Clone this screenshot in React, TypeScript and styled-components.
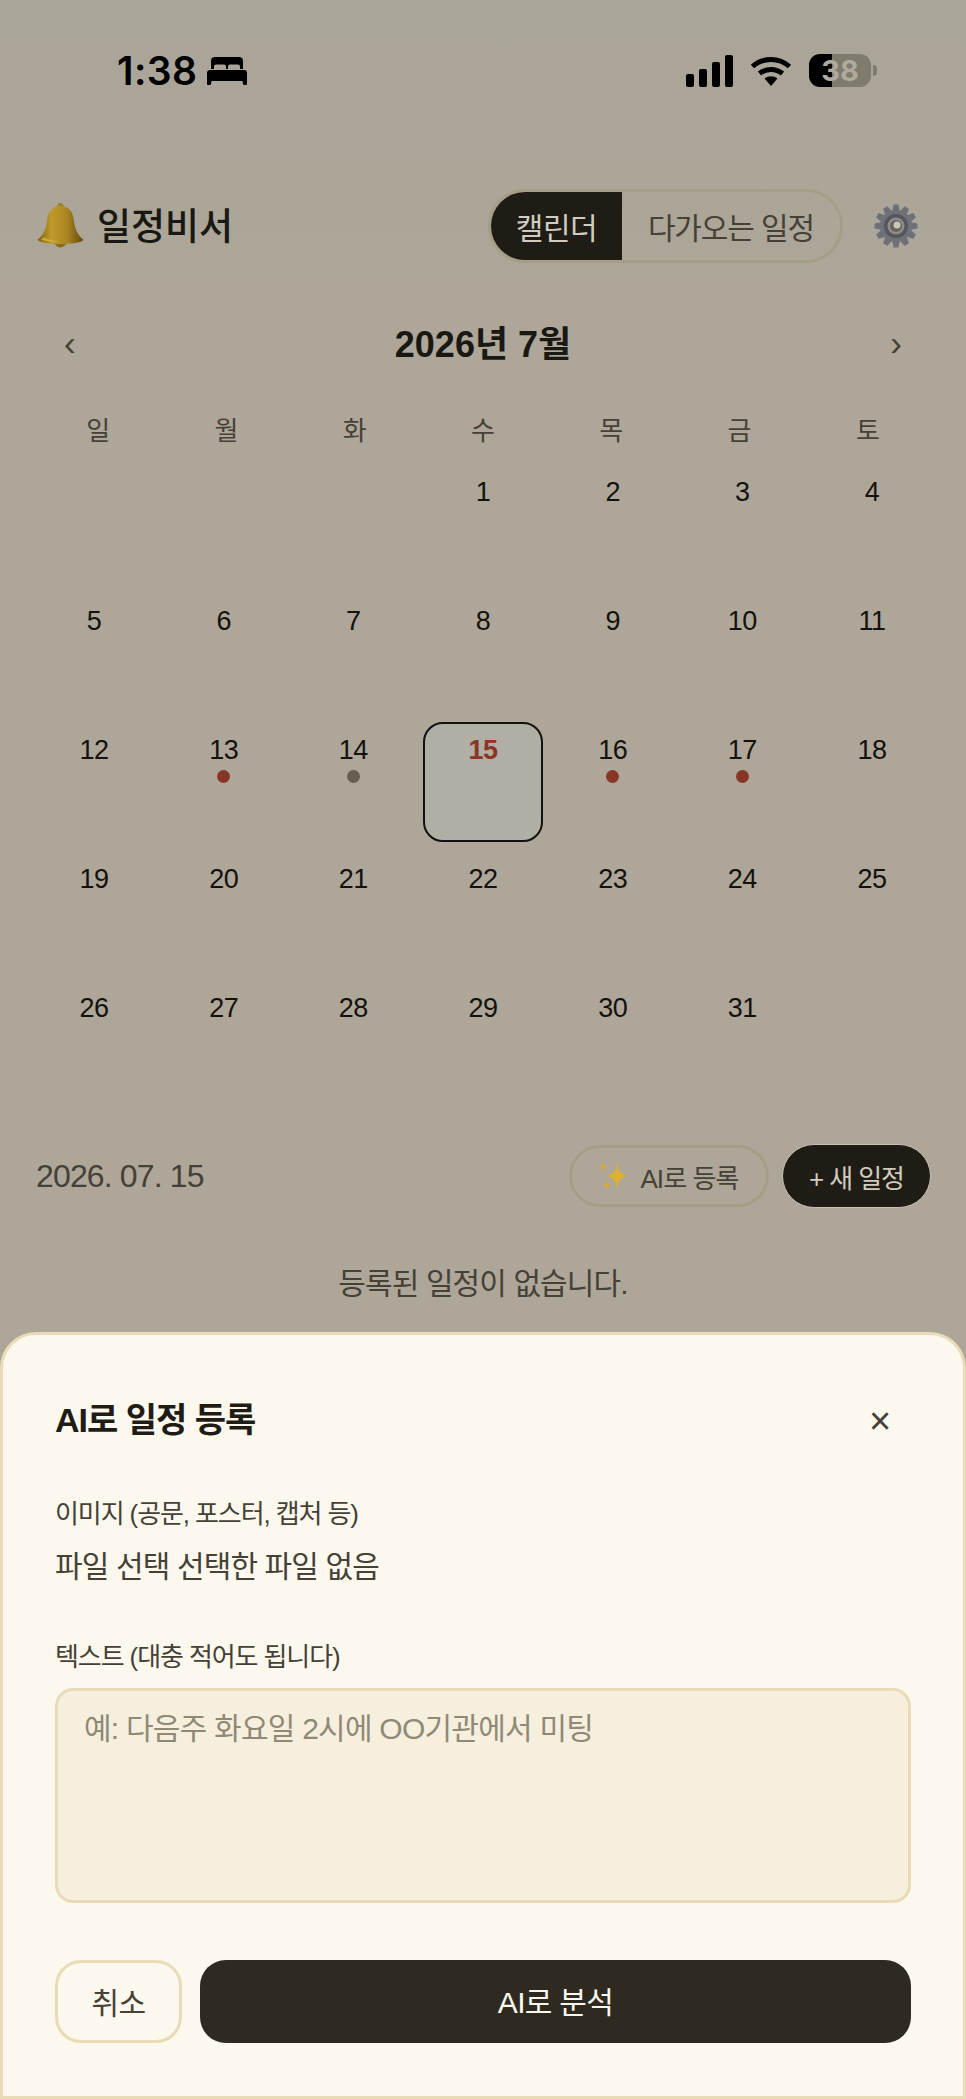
import styled, { createGlobalStyle } from 'styled-components'

const GlobalStyle = createGlobalStyle`
  * {
    box-sizing: border-box;
  }

  html,
  body {
    margin: 0;
    padding: 0;
  }

  body {
    font-family: 'Liberation Sans', 'Noto Sans CJK KR', sans-serif;
    background: #ada699;
  }
`

const Page = styled.div`
  position: relative;
  width: 966px;
  height: 2099px;
  overflow: hidden;
  background: linear-gradient(#a9a598 0, #ada699 300px);
  color: #1a1812;
`

const StatusBar = styled.div`
  display: flex;
  justify-content: space-between;
  height: 87px;
  padding: 54px 89px 0 117px;
`

const StatusGroup = styled.div`
  display: flex;
  align-items: center;
  height: 33px;
`

const Time = styled.span`
  font-family: Inter, sans-serif;
  font-size: 39px;
  font-weight: 600;
  letter-spacing: 0.4px;
  color: #000;
  margin-right: 10px;
`

const Battery = styled.div`
  display: flex;
  justify-content: center;
  align-items: center;
  width: 62px;
  height: 33px;
  margin-left: 17px;
  border-radius: 11px;
  background: linear-gradient(90deg, #000 37.5%, #7f7b6f 37.5%);
  color: #aeaa9d;
  font-family: Inter, sans-serif;
  font-size: 29px;
  font-weight: 700;
`

const BatteryCap = styled.div`
  width: 4px;
  height: 11px;
  margin-left: 2px;
  border-radius: 0 4px 4px 0;
  background: #7f7b6f;
`

const Header = styled.header`
  display: flex;
  align-items: center;
  height: 74px;
  margin-top: 102px;
  padding: 0 48px 0 37px;
`

const Brand = styled.h1`
  display: flex;
  align-items: center;
  gap: 13px;
  flex: 1;
  margin: 0;
  font-size: 37px;
  font-weight: 500;
`

const BrandName = styled.span`
  margin-bottom: 4px;
`

const Segment = styled.div`
  display: flex;
  width: 355px;
  height: 74px;
  border: 3px solid #a59e86;
  border-radius: 37px;
  overflow: hidden;
  margin-right: 31px;
`

const SegmentItem = styled.div<{ $active?: boolean }>`
  display: flex;
  justify-content: center;
  align-items: center;
  width: ${(p) => (p.$active ? '131px' : 'auto')};
  flex: ${(p) => (p.$active ? 'none' : 1)};
  background: ${(p) => (p.$active ? '#1f1c15' : 'transparent')};
  color: ${(p) => (p.$active ? '#cfcbbf' : '#454136')};
  font-size: 30px;
  letter-spacing: ${(p) => (p.$active ? '-0.5px' : '-1.1px')};
`

const MonthRow = styled.div`
  display: flex;
  justify-content: space-between;
  align-items: center;
  height: 60px;
  margin-top: 50px;
  padding: 0 64px;
`

const MonthArrow = styled.span`
  font-size: 35px;
  color: #454136;
`

const MonthTitle = styled.h2`
  margin: 0 0 4px;
  font-size: 36px;
  font-weight: 700;
`

const Weekdays = styled.div`
  display: grid;
  grid-template-columns: repeat(7, 1fr);
  height: 40px;
  margin-top: 35px;
  padding: 0 34px;
  align-items: center;
  text-align: center;
  color: #454136;
  font-size: 26px;
`

const Dates = styled.div`
  display: grid;
  grid-template-columns: repeat(7, 1fr);
  grid-auto-rows: 120px;
  column-gap: 9.6px;
  row-gap: 9px;
  margin-top: 16px;
  padding: 0 34px;
`

const Cell = styled.div<{ $selected?: boolean }>`
  display: flex;
  flex-direction: column;
  align-items: center;
  padding-top: 6.500px;
  border: 2.500px solid ${(p) => (p.$selected ? '#111' : 'transparent')};
  border-radius: 20px;
  background: ${(p) => (p.$selected ? '#b1aea4' : 'transparent')};
`

const DateNumber = styled.span<{ $selected?: boolean }>`
  font-size: 27px;
  line-height: 38px;
  letter-spacing: -0.5px;
  font-weight: ${(p) => (p.$selected ? 700 : 400)};
  color: ${(p) => (p.$selected ? '#8a3525' : '#14120d')};
`

const Dot = styled.span<{ $color: string }>`
  width: 13px;
  height: 13px;
  margin-top: 1px;
  border-radius: 50%;
  background: ${(p) => p.$color};
`

const DayBar = styled.div`
  display: flex;
  align-items: center;
  height: 64px;
  margin-top: 44px;
  padding: 0 35px 0 36px;
`

const DayLabel = styled.span`
  flex: 1;
  font-size: 32px;
  letter-spacing: -0.85px;
  color: #454136;
`

const GhostPill = styled.div`
  display: flex;
  justify-content: center;
  align-items: center;
  gap: 11px;
  width: 200px;
  height: 62px;
  margin-right: 13px;
  border: 3px solid #a59e86;
  border-radius: 31px;
  color: #454136;
  font-size: 26px;
  letter-spacing: -0.9px;
`

const DarkPill = styled.div`
  display: flex;
  justify-content: center;
  align-items: center;
  width: 149px;
  height: 64px;
  border: 1px solid #c5c0b0;
  border-radius: 32px;
  background: #1f1c15;
  color: #cfcbbf;
  font-size: 26px;
  letter-spacing: -1.1px;
`

const EmptyText = styled.p`
  margin: 56px 0 0;
  line-height: 40px;
  text-align: center;
  font-size: 30px;
  letter-spacing: -0.9px;
  color: #454136;
`

const Sheet = styled.section`
  position: absolute;
  left: 0;
  right: 0;
  bottom: 0;
  height: 767px;
  padding: 58px 52px 0;
  border: 3px solid #e8dcb8;
  border-radius: 36px 36px 0 0;
  background: #fcf8ee;
  color: #2f2a20;
`

const SheetHead = styled.div`
  display: flex;
  justify-content: space-between;
  align-items: center;
  height: 50px;
`

const SheetTitle = styled.h3`
  margin: 0 0 2px;
  font-size: 34px;
  font-weight: 700;
  letter-spacing: -1px;
  color: #1f1c15;
`

const CloseButton = styled.button`
  width: 62px;
  height: 50px;
  padding: 6px 0 0;
  border: 0;
  background: none;
  color: #454136;
  font-family: inherit;
  font-size: 38px;
`

const FieldLabel = styled.label<{ $top: number }>`
  display: block;
  margin-top: ${(p) => p.$top}px;
  line-height: 36px;
  font-size: 26px;
  letter-spacing: -1.1px;
  color: #454136;
`

const FileText = styled.div`
  margin-top: 13px;
  line-height: 44px;
  font-size: 30px;
  letter-spacing: -0.86px;
  color: #454136;
`

const Memo = styled.textarea`
  display: block;
  width: 100%;
  height: 215px;
  margin-top: 13px;
  padding: 13px 26px;
  border: 3px solid #e8dcb8;
  border-radius: 18px;
  background: #f6efde;
  font-family: inherit;
  font-size: 30px;
  letter-spacing: -0.76px;
  resize: none;

  &::placeholder {
    color: #8f8976;
    opacity: 1;
  }
`

const Actions = styled.div`
  display: flex;
  gap: 18px;
  height: 83px;
  margin-top: 57px;
`

const CancelButton = styled.button`
  width: 127px;
  padding: 0 0 2px;
  border: 3px solid #e8dcb8;
  border-radius: 26px;
  background: transparent;
  color: #454136;
  font-family: inherit;
  font-size: 30px;
  letter-spacing: -0.5px;
`

const SubmitButton = styled.button`
  flex: 1;
  padding: 0 0 3px;
  border: 0;
  border-radius: 26px;
  background: #2f2a20;
  color: #fcf8ee;
  font-family: inherit;
  font-size: 30px;
  letter-spacing: -0.7px;
`

const BedIcon = () => (
  <svg width="40" height="28" viewBox="0 0 40 28">
    <path
      fill="#000"
      fillRule="evenodd"
      d="M8 0h24a4 4 0 0 1 4 4v8h-3V9.500a2 2 0 0 0-2-2h-8a2 2 0 0 0-2 2V12h-2V9.500a2 2 0 0 0-2-2H9a2 2 0 0 0-2 2V12H4V4a4 4 0 0 1 4-4ZM3 13h34a3 3 0 0 1 3 3v11a1 1 0 0 1-1 1h-2a1 1 0 0 1-1-1l-.5-3h-31l-.5 3a1 1 0 0 1-1 1H1a1 1 0 0 1-1-1V16a3 3 0 0 1 3-3Z"
    />
  </svg>
)

const SignalIcon = () => (
  <svg width="47" height="32" viewBox="0 0 47 32">
    <rect x="0" y="19" width="8" height="13" rx="2" />
    <rect x="13" y="14" width="8" height="18" rx="2" />
    <rect x="26" y="7" width="8" height="25" rx="2" />
    <rect x="39" y="0" width="8" height="32" rx="2" />
  </svg>
)

const WifiIcon = () => (
  <svg width="42" height="31" viewBox="0 0 42 31" style={{ marginLeft: 17 }}>
    <path fill="none" stroke="#000" strokeWidth="5" d="M2.500 11.500C13 2 29 2 39.500 11.500" />
    <path fill="none" stroke="#000" strokeWidth="5" d="M9.500 18.500C16 13 26 13 32.500 18.500" />
    <path fill="#000" d="M14.500 23.500c3.800-3 9.200-3 13 0L21 31Z" />
  </svg>
)

const BellIcon = () => (
  <svg width="47" height="46" viewBox="0 0 47 46">
    <defs>
      <linearGradient id="bell" x1="0" x2="1" y1="0" y2="0">
        <stop offset="0" stopColor="#7d6012" />
        <stop offset="0.3" stopColor="#c19a2a" />
        <stop offset="0.65" stopColor="#a88421" />
        <stop offset="1" stopColor="#64490c" />
      </linearGradient>
    </defs>
    <circle cx="23.500" cy="3" r="3" fill="#a07f1e" />
    <circle cx="23.500" cy="38.500" r="6" fill="#8d6d18" />
    <path
      fill="url(#bell)"
      d="M23.500 3C14 3 11 10 10 18 9 27 6 32 .5 37c3 3 13 4 23 4s20-1 23-4C41 32 38 27 37 18 36 10 33 3 23.500 3Z"
    />
    <path fill="#d9b94a" opacity="0.7" d="M4 36.500c5 2 14 2.500 19 2.500-6-1.500-13-2-15.500-5Z" />
  </svg>
)

const gearTeeth = Array.from({ length: 12 }, (_, i) => i * 30)

const GearIcon = () => (
  <svg width="44" height="44" viewBox="0 0 44 44">
    {gearTeeth.map((deg) => (
      <path key={deg} d="M19.500 0.500h5l1.500 8h-8Z" fill="#6d7078" transform={`rotate(${deg} 22 22)`} />
    ))}
    <circle cx="22" cy="22" r="16" fill="#6f7179" />
    <circle cx="22" cy="22" r="12" fill="#55565c" />
    <circle cx="22" cy="22" r="8.500" fill="#8c8d8e" />
    <circle cx="22" cy="22" r="6" fill="#6a6355" />
    <circle cx="23" cy="21" r="3.500" fill="#c9c6ba" />
  </svg>
)

const SparklesIcon = () => (
  <svg width="30" height="30" viewBox="0 0 30 30">
    <path fill="#dcb32f" d="M18 1c.9 8 2 12 11 14-9 2-10.100 6-11 14-.9-8-2-12-11-14 9-2 10.100-6 11-14Z" />
    <path fill="#d9a936" d="M3.800 0c.4 3.500 1 5 4.200 6-3.200 1-3.800 2.500-4.200 6-.4-3.500-1-5-3.800-6 2.800-1 3.400-2.500 3.800-6Z" />
    <path fill="#d9a936" d="M8 18.500c.4 3.500 1 4.500 4.200 5.500-3.200 1-3.800 2-4.200 5.500-.4-3.500-1-4.500-4.200-5.500 3.200-1 3.800-2 4.200-5.500Z" />
  </svg>
)

const weekdays = ['일', '월', '화', '수', '목', '금', '토']
const leadingBlanks = [0, 1, 2]
const days = Array.from({ length: 31 }, (_, i) => i + 1)
const dotColors: Record<number, string> = {
  13: '#873625',
  14: '#665f4f',
  16: '#873625',
  17: '#873625',
}

const App = () => {
  return (
    <Page>
      <GlobalStyle />
      <StatusBar>
        <StatusGroup>
          <Time>1:38</Time>
          <BedIcon />
        </StatusGroup>
        <StatusGroup>
          <SignalIcon />
          <WifiIcon />
          <Battery>38</Battery>
          <BatteryCap />
        </StatusGroup>
      </StatusBar>

      <Header>
        <Brand>
          <BellIcon />
          <BrandName>일정비서</BrandName>
        </Brand>
        <Segment>
          <SegmentItem $active>캘린더</SegmentItem>
          <SegmentItem>다가오는 일정</SegmentItem>
        </Segment>
        <GearIcon />
      </Header>

      <MonthRow>
        <MonthArrow>‹</MonthArrow>
        <MonthTitle>2026년 7월</MonthTitle>
        <MonthArrow>›</MonthArrow>
      </MonthRow>

      <Weekdays>
        {weekdays.map((day) => (
          <div key={day}>{day}</div>
        ))}
      </Weekdays>

      <Dates>
        {leadingBlanks.map((n) => (
          <Cell key={n} />
        ))}
        {days.map((day) => (
          <Cell key={day} $selected={day === 15}>
            <DateNumber $selected={day === 15}>{day}</DateNumber>
            {dotColors[day] && <Dot $color={dotColors[day]} />}
          </Cell>
        ))}
      </Dates>

      <DayBar>
        <DayLabel>2026. 07. 15</DayLabel>
        <GhostPill>
          <SparklesIcon />
          AI로 등록
        </GhostPill>
        <DarkPill>+ 새 일정</DarkPill>
      </DayBar>

      <EmptyText>등록된 일정이 없습니다.</EmptyText>

      <Sheet>
        <SheetHead>
          <SheetTitle>AI로 일정 등록</SheetTitle>
          <CloseButton>×</CloseButton>
        </SheetHead>
        <FieldLabel $top={53}>이미지 (공문, 포스터, 캡처 등)</FieldLabel>
        <FileText>파일 선택 선택한 파일 없음</FileText>
        <FieldLabel $top={50}>텍스트 (대충 적어도 됩니다)</FieldLabel>
        <Memo placeholder="예: 다음주 화요일 2시에 OO기관에서 미팅" />
        <Actions>
          <CancelButton>취소</CancelButton>
          <SubmitButton>AI로 분석</SubmitButton>
        </Actions>
      </Sheet>
    </Page>
  )
}

export default App
